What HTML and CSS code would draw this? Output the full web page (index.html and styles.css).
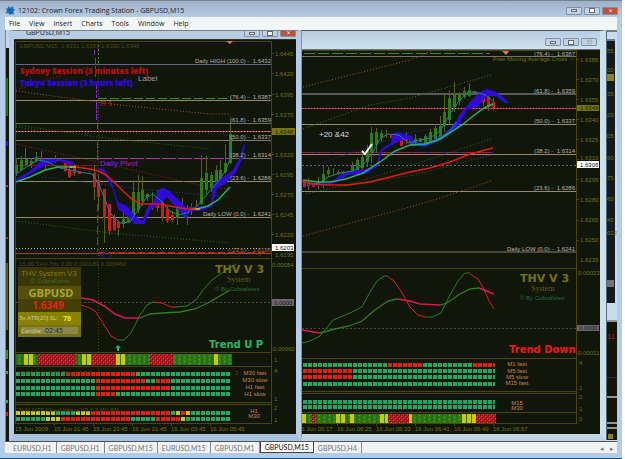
FILE: index.html
```html
<!DOCTYPE html>
<html lang="en">
<head>
<meta charset="utf-8">
<title>12102: Crown Forex Trading Station - GBPUSD,M15</title>
<link rel="stylesheet" href="styles.css">
</head>
<body>
<div class="app">
  <header class="titlebar">
    <svg class="logo" viewBox="0 0 12 12" aria-hidden="true"><path d="M1 3l2 1 1-3 2 2 3-2 0 3 2 1-2 2 1 3-3 0-2 1-1-2-3 0 1-3z" fill="#1673bd"/><path d="M3 5l2 1 2-2M5 9l3-2" stroke="#0a3f86" fill="none"/></svg>
    <h1>12102: Crown Forex Trading Station - GBPUSD,M15</h1>
    <div class="controls">
      <button aria-label="Minimize"><i class="min"></i></button>
      <button aria-label="Restore"><i class="max"></i></button>
      <button class="close" aria-label="Close">✕</button>
    </div>
  </header>
  <nav class="menu">
    <button>File</button><button>View</button><button>Insert</button><button>Charts</button><button>Tools</button><button>Window</button><button>Help</button>
  </nav>
  <main class="workspace">
    <svg class="strip" viewBox="5 30 4 411" preserveAspectRatio="none" aria-hidden="true">
      <path d="M5 30h4v411h-4z" fill="#121708"/><path d="M5 30h1v411h-1z" fill="#7d8796"/><path d="M6 30h3v18h-3z" fill="#c5d3e4"/>
      <path d="M6 78h2v38h-2z" fill="#2c6a12"/><path d="M6 141h2v5h-2z" fill="#2a12d8"/><path d="M6 185h2v2h-2z" fill="#c01fc0"/><path d="M6 237h2v2h-2zM6 412h2v4h-2z" fill="#c81e1e"/><path d="M6 263h2v67h-2z" fill="#5f5c0c"/><path d="M6 350h2v9h-2z" fill="#3d8f18"/><path d="M6 371h2v3h-2zM6 400h2v3h-2z" fill="#2aa86a"/>
    </svg>
    <section class="win win-left">
      <div class="win-title">
        <span class="caption">GBPUSD,M15</span>
        <div class="controls">
          <button aria-label="Minimize chart"><i class="min"></i></button>
          <button aria-label="Restore chart"><i class="max"></i></button>
          <button class="close" aria-label="Close chart">✕</button>
        </div>
      </div>
      <svg class="chart" viewBox="14 40 282 394" role="img" aria-label="GBPUSD M15 chart">
        <defs>
          <pattern id="hg" width="10" height="4" patternUnits="userSpaceOnUse"><path d="M0 0h10v4H0z" fill="#2f7d12"/><path d="M2 0v4M7 0v4" stroke="#245f10"/><path d="M4 1h1v1H4zM9 3h1v1H9z" fill="#2bb070"/></pattern>
          <pattern id="hr" width="4" height="4" patternUnits="userSpaceOnUse"><path d="M0 0h4v4H0z" fill="#b8121c"/><path d="M1 0h1v1H1zM3 2h1v1H3z" fill="#e84848"/><path d="M0 3h1v1H0zM2 1h1v1H2z" fill="#5a0a12"/></pattern>
        </defs>
        <path class="back" d="M14 40h282v394H14z"/>
        <g class="axis">
          <path d="M15.5 41V424M15 41.500H272M271.500 41V424M15 258.500H272M15 352.500H272M15 366.500H272M15 402.500H272M15 404.500H272M15 423.500H272"/>
          <path d="M272 53.500h2M272 73.500h2M272 94.500h2M272 114.500h2M272 154.500h2M272 174.500h2M272 194.500h2M272 214.500h2M272 234.500h2M54.500 424v2M93.500 424v2M132.500 424v2M171.500 424v2M210.500 424v2"/>
          <path d="M98.500 42V402M230.500 116V130" stroke-dasharray="1 2"/>
        </g>
        <g fill="none">
          <path d="M16 64.500H271" stroke="#66668e"/><path d="M16 100.500H271" stroke="#9c8768"/><path d="M98 98.500H231" stroke="#3a9018" stroke-dasharray="9 3"/>
          <path d="M16 123.500H271" stroke="#77706c"/><path d="M16 131.500H271" stroke="#ba4238"/><path d="M16 131.500H271" stroke="#f0a0a0" stroke-dasharray="1 2"/>
          <path d="M16 140.500H271" stroke="#837b68"/><path d="M16 158.500H98M232 158.500H271" stroke="#766e66"/><path d="M98 158.500H232" stroke="#c628a8" stroke-dasharray="14 2"/>
          <path d="M16 181.500H271M16 217.500H271" stroke="#9c8768"/><path d="M16 248.500H271" stroke="#b8b8b8" stroke-dasharray="1 2"/><path d="M16 253.500H271" stroke="#9a4d16"/>
          <path d="M98 252.500H268" stroke="#c41818" stroke-dasharray="7 3"/><path d="M16 165.500H98" stroke="#a01010" stroke-dasharray="11 2"/><path d="M16 302.500H271" stroke="#4c4c40" stroke-dasharray="2 2"/>
          <g stroke-dasharray="1 2">
            <path d="M16 91L120 105L210 114H230" stroke="#a0601c"/><path d="M16 90L90 66" stroke="#b01a1a"/><path d="M16 144L98 162L208 187L230 189" stroke="#b01a1a"/>
            <path d="M16 125L98 137L210 149M16 221L110 233L230 243" stroke="#2c6c1c"/><path d="M42 177L150 190L230 197" stroke="#1c38a8"/><path d="M16 127L36 130" stroke="#2c6c1c"/>
          </g>
          <path d="M94.500 50V55M95.500 58V78M96.500 82V98M96.500 102V120M97.500 122V130M97.500 142V160" stroke="#8b1ee6" stroke-dasharray="7 1 3 1"/>
          <path d="M98.500 45V63" stroke="#3a9018" stroke-dasharray="2 2"/><path d="M97.500 204V252" stroke="#c01818" stroke-dasharray="8 3"/>
        </g>
        <path class="wick" d="M16.500 158v18M21.500 156v15M25.500 148v18M31.500 158v10M36.500 152v10M41.500 151v14M45.500 158v12M55.500 155v8M65.500 160v12M69.500 166v12M74.500 164v12M94.500 165v35M98.500 175v35M104.500 189v54M109.500 204v31M114.500 214v17M118.500 220v16M123.500 213v15M128.500 210v13M133.500 180v40M138.500 175v38M142.500 176v30M147.500 193v8M152.500 192v18M157.500 190v22M162.500 199v22M167.500 206v17M172.500 211v11M177.500 203v22M182.500 198v15M187.500 205v20M191.500 203v12M196.500 200v10M201.500 155v50M206.500 156v38M211.500 172v20M216.500 165v22M220.500 160v23M225.500 144v30M230.500 124v40"/>
        <path class="bull" d="M16.500 165v8M21.500 160v10M26.500 159v6M31.500 161v3M36.500 157v4M123.500 219v5M128.500 213v9M133.500 192v25M138.500 192v18M142.500 190v11M147.500 194v3M177.500 207v11M182.500 208v4M191.500 207v3M201.500 178v26M206.500 173v17M211.500 175v13M216.500 170v15M220.500 170v10M225.500 163v9M230.500 134v29"/>
        <path class="bear" d="M41.500 159v3M45.500 159v6M50.500 160v3M65.500 163v8M69.500 170v7M74.500 168v5M79.500 171v3M94.500 173v14M98.500 180v17M104.500 189v29M109.500 204v27M114.500 218v12M118.500 222v6M157.500 195v13M162.500 202v15M167.500 209v12M172.500 215v5M187.500 210v2"/>
        <path class="cloud" d="M16 179L30 171L42 159H60L74 162L72 166L60 161L48 164L30 174L17 182ZM96 168L104 169L111 181L118 202L127 206L135 216L142 221L148 206L153 202L158 190L163 188L168 190L180 201L187 208L211 205L213 184L219 180L233 170L240 157L244 144L245 146L242 159L236 172L225 184L217 188L212 207L200 211L190 211L186 219L178 210L167 197L160 204L151 209L144 224H134L127 216L118 209L113 190L104 173Z"/>
        <path class="ma teal" d="M16 174L25 168L38 160L48 162L60 168L80 172L92 174L98 182L105 200L111 214L120 223L130 222L138 210L146 198L153 194L160 200L170 211L178 215L187 213L197 206L208 193L218 182L226 170L230 159L232 138"/>
        <path class="ma green" d="M16 182L30 177L45 170L58 167L72 167M197 209L208 206L218 200L230 187"/><path class="ma gold" d="M70 167H76M192 209H200"/>
        <path class="ma red" d="M76 167L90 169L98 171L106 175L115 183L124 192L133 200L141 204L160 204L175 207L187 209L195 209"/>
        <g class="ma">
          <path class="red thin" d="M81 305L90 308L96 312L104 325L111 336L118 340"/><path class="leaf thin" d="M118 340L124 340L131 333L140 315L147 305L153 302"/><path class="red thin" d="M153 302L162 303L171 307H176"/><path class="leaf thin" d="M176 307L187 306L196 300L203 290L212 280L222 273L236 264"/>
          <path class="magenta" d="M81 298L93 300L104 306L115 314L125 318L140 318"/><path class="leaf" d="M140 318L150 314L162 313L180 312L195 309L208 303L230 290"/>
        </g>
        <path d="M226 41h7l-3 3z" fill="#ee7442"/><path d="M118 345l3 3h-2v3h-2v-3h-2z" fill="#20b870"/>
        <g class="dots"><path class="g" d="M16 374H231M16 381H231M16 388H231M16 394H231M16 413H231M16 419H231"/><path class="r" d="M66 374H136M96 381H145M156 381H171M96 388H171M96 394H116M91 413H171M61 419H131M156 419H181M181 413H186"/><path class="y" d="M16 413H56M76 413H91M176 413H181M186 413H191M46 419H61M181 419H186"/></g>
        <path d="M16 354H232V365H16z" fill="url(#hg)"/><path d="M37 354H76V365H37zM92 354H116V365H92zM150 354H173V365H150z" fill="url(#hr)"/><path d="M24 354h4v11h-4zM29 354h4v11h-4zM82 354h4v11h-4zM87 354h4v11h-4zM116 354h4v11h-4zM121 354h4v11h-4zM214 354h4v11h-4z" fill="#c8c80c"/>
        <g class="t dim"><text x="19" y="48">GBPUSD,M15&#160; 1.6331 1.6367 1.6330 1.6348</text><text x="19" y="266">15.00 THV-Trix 0.00 0.000181 0.000460</text><text x="18" y="375">15.00 THV M15 Cloud 1 1 2</text><text x="235" y="375">2</text><text x="18" y="412">THV MTF Cloud Hama V3.1.2 (60,60)</text></g>
        <g class="t lvl"><text x="271" y="63">Daily HIGH (100.0) -&#160; 1.6432</text><text x="271" y="99">(76.4) -&#160; 1.6387</text><text x="271" y="122">(61.8) -&#160; 1.6359</text><text x="271" y="139">(50.0) -&#160; 1.6337</text><text x="271" y="157">(38.2) -&#160; 1.6314</text><text x="271" y="180">(23.6) -&#160; 1.6286</text><text x="271" y="216">Daily LOW (0.0) -&#160; 1.6241</text><text x="271" y="252" fill="#a85a38">(-23.6) -&#160; 1.6196</text></g>
        <path d="M272 128h23v7h-23z" fill="#77750a"/><path d="M272 244h22v7h-22z" fill="#fff"/><path d="M272 299h22v7h-22z" fill="#6c6670"/>
        <g class="t price"><text x="275" y="56">1.6445</text><text x="275" y="76">1.6420</text><text x="275" y="97">1.6395</text><text x="275" y="117">1.6370</text><text x="275" y="134" fill="#1c1c00">1.6348</text><text x="275" y="157">1.6320</text><text x="275" y="177">1.6295</text><text x="275" y="197">1.6270</text><text x="275" y="217">1.6245</text><text x="275" y="237">1.6220</text><text x="275" y="250" fill="#111">1.6203</text><text x="275" y="257">1.6195</text><text x="272" y="267">0.00054</text><text x="274" y="305" fill="#191919">0.0000</text><text x="271" y="351">-0.00060</text><text x="274" y="362">1</text><text x="274" y="373">4</text><text x="274" y="401">1</text><text x="274" y="410">2</text><text x="274" y="422">1</text>
        <text x="15" y="431">15 Jun 2009</text><text x="54" y="431">15 Jun 21:45</text><text x="93" y="431">15 Jun 23:45</text><text x="132" y="431">16 Jun 01:45</text><text x="171" y="431">16 Jun 03:45</text><text x="210" y="431">16 Jun 05:45</text></g>
        <g class="t tf"><text x="255" y="375">M30 fast</text><text x="255" y="382">M30 slow</text><text x="255" y="389">H1 fast</text><text x="255" y="396">H1 slow</text><text x="254" y="413">H1</text><text x="254" y="418">M30</text></g>
        <text class="bold session" x="20" y="74" fill="#b90d12">Sydney Session (3 minutes left)</text><text class="bold session" x="20" y="86" fill="#3008e8">Tokyo Session (3 hours left)</text>
        <text class="note" x="138" y="81" fill="#9a9ab0">Label</text><text class="note" x="100" y="106" fill="#c01010">R 1</text><text class="note" x="100" y="166" fill="#a418d8">Daily Pivot</text><text class="note" x="100" y="258" fill="#2014b8">S 1</text>
        <text class="bold brand" x="215" y="273">THV V 3</text><text class="serif" x="227" y="282">System</text><text class="tiny" x="215" y="291">© By Cobraforex</text><text class="bold big" x="209" y="348" fill="#20ba68">Trend U P</text>
        <g><path d="M18 267h63v19H18z" fill="#393607"/><path d="M18 286h63v13H18z" fill="#555008"/><path d="M18 299h63v13H18z" fill="#433f06"/><path d="M18 312h63v13H18z" fill="#878108"/><path d="M18 325h63v12H18z" fill="#77720b"/><path d="M21 327h57v7H21z" fill="#8c874a"/></g>
        <g class="panel"><text x="49" y="276" fill="#86800d" font-size="8">THV System V3</text><text x="50" y="283" fill="#397a16" font-size="6">© CobraForex</text><text class="b" x="51" y="297" fill="#aaa52c" font-size="11">GBPUSD</text><text class="b" x="48" y="309" fill="#ed1d10" font-size="10">1.6349</text><text class="l" x="19" y="320" fill="#d4d194" font-size="6">3x ATR(20) SL:</text><text class="b l" x="63" y="321" fill="#f2ee08" font-size="7">78</text><text class="l" x="21" y="333" fill="#d4d194" font-size="6">Candle:</text><text class="l" x="45" y="333" fill="#18185a" font-size="7">02:45</text></g>
      </svg>
    </section>
    <section class="win win-right">
      <div class="win-title">
        <div class="controls">
          <button aria-label="Minimize chart"><i class="min"></i></button>
          <button aria-label="Restore chart"><i class="max"></i></button>
          <button aria-label="Close chart">✕</button>
        </div>
      </div>
      <svg class="chart" viewBox="302 50 298 384" role="img" aria-label="GBPUSD M1 chart">
        <path class="back" d="M302 50h298v384H302z"/>
        <g class="axis"><path d="M302 50.500H577M576.500 50V424M302 268.500H577M302 358.500H577M302 391.500H577M302 393.500H577M302 412.500H577M302 423.500H577"/><path d="M577 59.500h2M577 79.500h2M577 99.500h2M577 119.500h2M577 139.500h2M577 159.500h2M577 179.500h2M577 199.500h2M577 220.500h2M577 240.500h2M337.500 424v2M376.500 424v2M415.500 424v2M454.500 424v2M493.500 424v2"/></g>
        <g fill="none">
          <path d="M304 53.500H490" stroke="#3a9018" stroke-dasharray="11 3"/><path d="M302 56.500H576" stroke="#78706a"/><path d="M302 94H576" stroke="#5b5758" stroke-width="2"/><path d="M302 108.500H576" stroke="#b92530"/><path d="M302 108.500H576" stroke="#ea7090" stroke-dasharray="1 2"/><path d="M302 124.500H576" stroke="#9c8768"/><path d="M302 152.500H493" stroke="#a81c30" stroke-dasharray="12 4"/><path d="M314 152.500H493" stroke="#3424c0" stroke-dasharray="4 12"/><path d="M302 154.500H576M302 191.500H576" stroke="#9c8768"/><path d="M302 165.500H576" stroke="#62627a" stroke-dasharray="2 2"/><path d="M302 252H576" stroke="#4e4540" stroke-width="2"/><path d="M302 328.500H576" stroke="#484840" stroke-dasharray="2 2"/>
          <g stroke-dasharray="1 2"><path d="M303 87L410 60L432 51" stroke="#9c5c1c"/><path d="M303 129L370 105L410 98L491 75" stroke="#3a7a18"/><path d="M303 236L410 207L440 198L491 181" stroke="#9c5c1c"/><path d="M303 169L360 150L410 133L440 127" stroke="#1c2c88"/><path d="M306 194L350 184L415 164L491 139M345 185L415 175L491 155" stroke="#2c6a1c"/></g>
        </g>
        <path class="wick" d="M308.500 178v12M318.500 177v12M323.500 166v22M328.500 167v10M333.500 168v7M338.500 170v5M343.500 171v5M352.500 162v12M357.500 158v15M362.500 150v20M367.500 145v22M371.500 127v36M376.500 128v25M381.500 130v12M386.500 130v8M396.500 133v10M406.500 132v12M410.500 136v10M415.500 134v12M425.500 134v11M430.500 129v14M435.500 124v17M440.500 116v22M444.500 94v38M449.500 90v34M454.500 82v30M459.500 92v13M464.500 87v12M469.500 83v14M483.500 94v12M488.500 94v17M493.500 98v12"/>
        <path class="bull" d="M318.500 182v4M323.500 174v9M328.500 170v4M343.500 172v2M352.500 165v7M357.500 160v12M362.500 157v11M367.500 150v12M371.500 133v19M376.500 132v13M381.500 133v5M410.500 138v5M415.500 139v6M420.500 138v4M425.500 136v8M430.500 132v10M435.500 128v11M440.500 126v12M444.500 112v14M449.500 98v22M454.500 93v14M459.500 94v7M464.500 91v6M469.500 90v6"/>
        <path class="bear" d="M304.500 182v5M308.500 182v4M313.500 184v3M338.500 172v2M391.500 134v4M396.500 135v6M401.500 140v6M406.500 137v4M474.500 91v2M483.500 96v6M488.500 97v10M493.500 102v6"/>
        <path class="cloud" d="M303 184L330 183L340 175L350 171L366 169L376 165L381 149L391 143L392 134L398 132L412 136L415 146L408 139L397 142L382 151L378 166L366 174L348 175L335 183L320 186ZM454 127L459 115L470 102L480 92L487 89L496 92L503 97L509 103L505 103L496 96L486 96L478 107L467 110L457 129Z"/>
        <path class="ma teal" d="M303 182L318 184L328 177L340 173L353 171L363 165L373 152L380 139L388 134L399 135L408 143L416 141L430 138L440 131L450 114L459 101L468 92L476 92L485 95L493 101"/>
        <path class="ma blue" d="M410 144L425 145L440 139L451 130L457 122"/>
        <path class="ma green" d="M303 180L318 182H330L346 179L363 173L380 162L395 151L410 145L425 144L438 140L448 134L462 125L473 116L484 108L493 104"/>
        <path class="ma red" d="M302 181L312 184L330 185L348 185L370 182L390 177L410 172L430 168L450 162L470 154L493 148"/>
        <g class="ma"><path class="leaf thin" d="M302 343L310 341L320 336L333 320L350 313L362 307L370 292L377 281L384 276H387"/><path class="red thin" d="M387 276L394 281L402 293L410 307L418 315L425 317"/><path class="leaf thin" d="M425 317H432L441 313L450 295L458 281L465 273H470"/><path class="red thin" d="M470 274L478 279L484 289L489 301L494 309"/>
        <path class="magenta" d="M302 330L320 333M397 299L410 301L420 304L440 305M479 288L494 294"/><path class="leaf" d="M320 333L335 329L349 326L362 321L375 310L388 301L397 299M440 305L447 303L460 294L470 289L479 288"/></g>
        <path d="M502 51h7l-3 4z" fill="#ee7442"/><path d="M362 151l3 3 7-10" stroke="#fff" stroke-width="2" fill="none"/>
        <g class="dots"><path class="g" d="M303 365H495M303 371H495M303 377H495M303 384H495M303 402H495M303 407H495"/><path class="r" d="M388 365H422M473 365H495M303 371H352M303 377H352"/></g>
        <path d="M302 414H496V423H302z" fill="url(#hg)"/><path d="M311 414h5v9h-5zM388 414h21v9h-21zM476 414h20v9h-20z" fill="url(#hr)"/><path d="M302 414h4v9h-4zM336 414h4v9h-4zM341 414h4v9h-4zM350 414h4v9h-4zM380 414h4v9h-4zM385 414h3v9h-3zM409 414h3v9h-3zM462 414h4v9h-4zM467 414h4v9h-4zM472 414h4v9h-4z" fill="#c8c80c"/>
        <g class="t lvl"><text x="575" y="56">(76.4) -&#160; 1.6387</text><text x="575" y="93">(61.8) -&#160; 1.6359</text><text x="575" y="123">(50.0) -&#160; 1.6337</text><text x="575" y="153">(38.2) -&#160; 1.6314</text><text x="575" y="190">(23.6) -&#160; 1.6286</text><text x="575" y="251">Daily LOW (0.0) -&#160; 1.6241</text></g>
        <text class="t" x="493" y="61" fill="#75740c">Free Moving Average Cross ☼</text>
        <path d="M577 105h22v6h-22z" fill="#77750a"/><path d="M577 161h22v7h-22z" fill="#fff"/><path d="M577 325h22v6h-22z" fill="#6c6670"/>
        <g class="t price"><text x="580" y="62">1.6385</text><text x="580" y="82">1.6370</text><text x="580" y="102">1.6355</text><text x="580" y="110" fill="#1c1c00">1.6348</text><text x="580" y="122">1.6340</text><text x="580" y="142">1.6325</text><text x="580" y="160">1.6310</text><text x="580" y="167" fill="#111">1.6306</text><text x="580" y="182">1.6295</text><text x="580" y="202">1.6280</text><text x="580" y="222">1.6265</text><text x="580" y="242">1.6250</text><text x="580" y="262">1.6235</text><text x="578" y="275">0.00023</text><text x="579" y="330" fill="#191919">0.0000</text><text x="576" y="355">-0.00011</text><text x="579" y="365">4</text><text x="579" y="390">1</text><text x="579" y="399">2</text><text x="579" y="411">1</text><text x="579" y="421">0</text>
        <text x="298" y="431">16 Jun 06:17</text><text x="337" y="431">16 Jun 06:25</text><text x="376" y="431">16 Jun 06:33</text><text x="415" y="431">16 Jun 06:41</text><text x="454" y="431">16 Jun 06:49</text><text x="493" y="431">16 Jun 06:57</text></g>
        <g class="t tf"><text x="517" y="366">M1 fast</text><text x="517" y="373">M5 fast</text><text x="517" y="379">M5 slow</text><text x="517" y="385">M15 fast</text><text x="517" y="405">M15</text><text x="517" y="410">M30</text></g>
        <text x="319" y="137" class="note" fill="#ddd">+20 &amp;42</text><text class="bold brand" x="520" y="282">THV V 3</text><text class="serif" x="531" y="291">System</text><text class="tiny" x="520" y="300">© By Cobraforex</text><text class="bold big" x="509" y="353" fill="#f31b08">Trend Down</text>
      </svg>
    </section>
    <svg class="strip" viewBox="606 30 11 411" preserveAspectRatio="none" aria-hidden="true">
      <path d="M606 30h11v411h-11z" fill="#c7dcec"/><path d="M606 30h11v2h-11zM606 39h9v2h-9z" fill="#737b84"/><path d="M607 41h8v262h-8z" fill="#121c20"/><path d="M606 32h1v408h-1z" fill="#596574"/><path d="M607 322h10v118h-10z" fill="#111608"/><path d="M607 320h10v2h-10zM607 396h10v2h-10zM607 422h10v2h-10zM607 427h10v2h-10z" fill="#8f969c"/>
      <path d="M607 74h7v7h-7zM608 434h5v5h-5z" fill="#89860c"/><path d="M607 280h7v7h-7z" fill="#777078"/><path d="M607 377h10v1h-10z" fill="#2c2470"/>
      <g class="t price"><text x="607" y="53">55</text><text x="607" y="72">00</text><text x="607" y="96">35</text><text x="607" y="117">20</text><text x="607" y="138">05</text><text x="607" y="160">90</text><text x="607" y="180">75</text><text x="607" y="201">60</text><text x="607" y="222">45</text><text x="607" y="235">022</text></g><text x="607" y="339" class="note" fill="#c41414">11</text>
    </svg>
  </main>
  <nav class="tabs">
    <button>EURUSD,H1</button><button>GBPUSD,H1</button><button>GBPUSD,M15</button><button>EURUSD,M15</button><button>GBPUSD,M1</button><button class="active">GBPUSD,M15</button><button>GBPUSD,H4</button>
    <div class="arrows"><button aria-label="Scroll left">◂</button><button aria-label="Scroll right">▸</button></div>
  </nav>
</div>
</body>
</html>
```
FILE: styles.css
```css
* { box-sizing: border-box; }
body { margin: 0; background: #fff; font-family: "Open Sans", "Noto Sans", sans-serif; font-size: 7px; line-height: 10px; color: #222; }
button { margin: 0; padding: 0; border: 0; background: none; font: inherit; color: inherit; white-space: nowrap; }
svg { display: block; }

.app { display: flex; flex-direction: column; height: 100vh; margin-right: 3px; padding: 0 5px 5px; background: #b4cce6; border-top: 1px solid #74818e; border-bottom: 1px solid #0c568e; overflow: hidden; }
.titlebar { display: flex; align-items: center; height: 16px; margin: 0 -5px; padding: 3px 4px 0 5px; flex: none; background: linear-gradient(#a1b0c5, #b4cce6); }
.logo { width: 11px; height: 11px; }
h1 { flex: 1; margin: 0 0 0 2px; font-size: 7px; line-height: 10px; font-weight: 400; }

.controls { display: flex; gap: 2px; }
.controls button { display: flex; align-items: center; justify-content: center; width: 16px; height: 8px; border: 1px solid #7f91a6; border-radius: 1px; background: #c2d2e3; color: #fff; font-size: 6px; line-height: 6px; text-shadow: 0 0 1px #333, 0 0 1px #333; }
.controls .close { background: #c45133; }
.min { width: 6px; height: 3px; border: 1px solid #606974; background: #fff; }
.max { width: 6px; height: 5px; border: 1px solid #606974; background: #fff; }

.menu { display: flex; gap: 9px; height: 13px; padding: 1px 4px; flex: none; background: #f2f6f6; }

.workspace { display: grid; grid-template-columns: 4px minmax(0, 292fr) minmax(0, 305fr) 11px; grid-template-rows: minmax(0, 1fr); flex: 1; min-height: 0; }
.strip { width: 100%; height: 100%; }
.win { display: flex; flex-direction: column; min-height: 0; min-width: 0; overflow: hidden; }
.win-left { border: 5px solid #b4cce6; border-top: 1px solid #777f89; border-bottom: 7px solid #a8c3df; }
.win-right { border: 6px solid #c9e0ed; border-top: 1px solid #4e565c; border-left: 1px solid #20b8e6; border-bottom: 7px solid #c0d5e4; }
.win-title { display: flex; justify-content: flex-end; flex: none; background: #b8cce2; }
.win-left .win-title { height: 9px; border-bottom: 1px solid #333; overflow: hidden; }
.win-right .win-title { height: 19px; padding: 7px 3px 0 0; background: linear-gradient(#b8cce2, #cde4ef); border-bottom: 1px solid #6a7274; }
.caption { flex: 1; padding-left: 12px; line-height: 4px; }
.win-left .controls { margin-top: -2px; }
.chart { flex: 1; width: 100%; min-height: 0; }

.back { fill: #11160a; }
.axis { stroke: #4c4700; fill: none; }
.t { font: 6px "Liberation Sans", sans-serif; }
.dim { fill: #504e0a; }
.lvl { fill: #bcb2a2; text-anchor: end; }
.price { fill: #76710c; }
.tf { fill: #c8824a; text-anchor: middle; }
.bold { font-family: "DejaVu Sans", sans-serif; font-weight: 700; }
.session { font-family: "Open Sans", sans-serif; font-size: 8px; font-weight: 800; }
.note { font: 8px "Liberation Sans", sans-serif; }
.brand { font-size: 11px; fill: #77720c; }
.big { font-size: 10px; }
.serif { font: 8px "Liberation Serif", serif; fill: #625e0b; }
.tiny { font: 6px "Liberation Sans", sans-serif; fill: #276c3c; }
.panel { font-family: "Open Sans", sans-serif; text-anchor: middle; }
.panel .l { text-anchor: start; }
.panel .b { font-weight: 700; }

.wick { stroke: #5a6012; fill: none; }
.bull { stroke: #2d7d0c; stroke-width: 3; fill: none; }
.bear { stroke: #d0191e; stroke-width: 3; fill: none; }
.cloud { fill: #300ad8; }
.ma { fill: none; stroke-width: 1; }
.teal { stroke: #18859a; }
.green { stroke: #24b35e; stroke-width: 1.5; }
.blue { stroke: #2434f0; stroke-width: 3; }
.red { stroke: #e81910; stroke-width: 1.5; }
.gold { stroke: #c8c414; stroke-width: 1.5; }
.leaf { stroke: #2c8018; stroke-width: 1.3; }
.magenta { stroke: #e01458; stroke-width: 1.5; }
.ma .thin { stroke-width: 1; }
.dots path { fill: none; stroke-width: 4; stroke-dasharray: 4 1; }
.dots .g { stroke: #20a862; }
.dots .r { stroke: #e82008; }
.dots .y { stroke: #c8c80c; }

.tabs { display: flex; align-items: stretch; height: 12px; padding-left: 4px; flex: none; background: #f0f3f4; border-top: 1px solid #4d5358; color: #777; font-family: Lato, sans-serif; }
.tabs > button { padding: 0 4px; border-right: 1px solid #888; }
.tabs > .active { background: #fff; color: #111; border: 1px solid #444; border-top: 0; }
.arrows { display: flex; gap: 6px; margin-left: auto; padding-right: 3px; }
```
